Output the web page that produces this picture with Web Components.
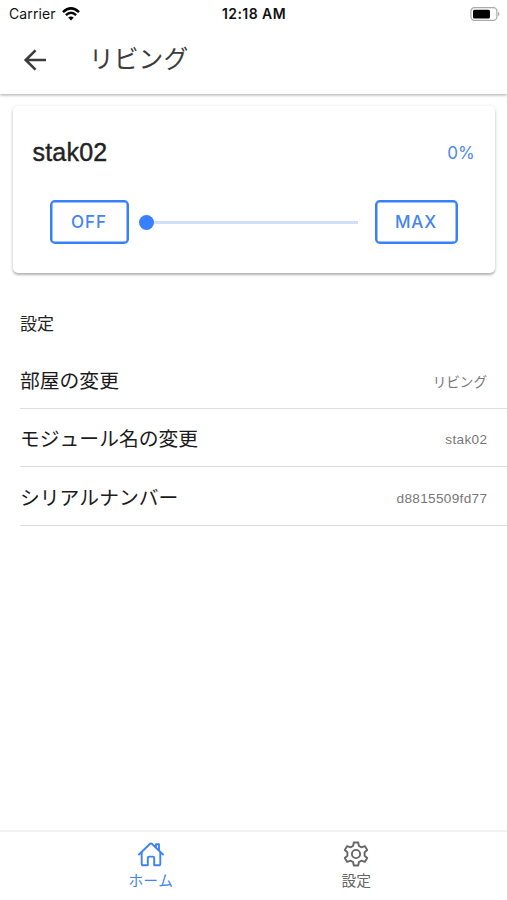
<!DOCTYPE html>
<html lang="ja">
<head>
<meta charset="utf-8">
<title>リビング</title>
<style>
html,body{margin:0;height:100%;background:#fff}
body{font-family:"Liberation Sans","Noto Sans CJK JP",sans-serif;color:#222;font-kerning:none}
</style>
</head>
<body>
<room-screen></room-screen>
<script>
const define = (name, html) => customElements.define(name, class extends HTMLElement {
  constructor() {
    super();
    const t = document.createElement('template');
    t.innerHTML = html;
    this.attachShadow({mode: 'open'}).append(t.content.cloneNode(true));
  }
});

define('status-bar', `<style>
:host{display:grid;grid-template-columns:1fr auto 1fr;align-items:center;height:28px;box-sizing:border-box;padding:0 7px 1px 9px;font:14px/26px Inter,sans-serif;color:#111;background:#fff;position:relative;z-index:1}
.left{display:flex;align-items:center;gap:6px;letter-spacing:.1px}
b{font-weight:600;font-size:14px;letter-spacing:.45px;margin-right:1px}
.battery{justify-self:end}
svg{display:block}
</style>
<div class="left"><span>Carrier</span><svg width="18" height="14" viewBox="0 0 18 14" fill="none" stroke="#000" stroke-width="2.5"><path d="M1 5.1Q9-2.4 17 5.1M3.9 8.1Q9 3.3 14.1 8.1"/><path d="M9 13.4 6.2 10.6Q9 8.3 11.8 10.6Z" fill="#000" stroke="none"/></svg></div>
<b>12:18 AM</b>
<svg class="battery" width="30" height="14" viewBox="0 0 30 14"><rect x=".9" y=".7" width="26" height="12.6" rx="3.6" fill="none" stroke="#aaa" stroke-width="1.2"/><rect x="3" y="2.8" width="17" height="8.6" rx="1.5"/><path d="M28 4.8Q31 7 28 9.2Z" fill="#aaa"/></svg>`);

define('nav-header', `<style>
:host{display:flex;align-items:center;gap:42px;height:66px;box-sizing:border-box;padding:0 0 2px 23px;position:relative;background:#fff;box-shadow:0 1px 3px rgba(0,0,0,.36);font-size:24.8px;line-height:36px;color:#3c3c3c}
svg{display:block;width:24px;height:22px;flex:none}
</style>
<svg viewBox="0 0 24 22" fill="none" stroke="#3c3c3c" stroke-width="2.6"><path d="M23 11H3M12.5 1.3 2.7 11l9.8 9.7"/></svg><slot></slot>`);

define('outline-button', `<style>
:host{display:flex;align-items:center;justify-content:center;box-sizing:border-box;height:44px;border:2px solid #3880f5;box-shadow:inset 0 0 0 .5px #3880f5;border-radius:5px;color:#4484f3;font:500 17px/40px Inter,sans-serif;letter-spacing:.9px;padding-right:1px}
</style><slot></slot>`);

define('level-slider', `<style>
:host{display:flex;align-items:center}
i{width:15px;height:15px;border-radius:50%;background:#3880ff;flex:none}
span{height:3px;flex:1;background:#d0dffa}
</style><i></i><span></span>`);

define('module-card', `<style>
:host{display:flex;flex-direction:column;margin:12px 12px 0 13px;height:167px;box-sizing:border-box;border-radius:5px;background:#fff;box-shadow:0 2px 2px rgba(0,0,0,.22),0 1px 4px rgba(0,0,0,.14)}
.top{display:flex;justify-content:space-between;align-items:center;padding:28px 20px 0 19.5px;height:37px}
.name{font-size:25px;line-height:36px;letter-spacing:.2px;color:#222;-webkit-text-stroke:.4px #222;margin-top:-1px}
.value{font:17px/36px Inter,sans-serif;letter-spacing:.2px;color:#4d87ef}
.controls{display:grid;grid-template-columns:79px 1fr 83px;padding:29px 37px 0 37px}
level-slider{margin:0 17px 0 10px}
</style>
<div class="top"><span class="name">stak02</span><span class="value">0%</span></div>
<div class="controls"><outline-button>OFF</outline-button><level-slider></level-slider><outline-button>MAX</outline-button></div>`);

define('setting-row', `<style>
:host{display:flex;justify-content:space-between;align-items:center;height:58.6px;box-sizing:border-box;border-bottom:1.5px solid #dedede;padding:1px 20px 0 0;font-size:19.8px;color:#1b1b1b}
.v{font-size:13.6px;color:#777;margin-top:4px}
::slotted([lang=en]){letter-spacing:.32px;margin-right:-.3px}
</style><slot></slot><span class="v"><slot name="value"></slot></span>`);

define('settings-list', `<style>
:host{display:block;padding:38px 0 0 20px}
h2{margin:0 0 12px;font-size:17px;line-height:27px;font-weight:400;color:#222}
</style><h2>設定</h2><slot></slot>`);

define('tab-item', `<style>
:host{display:flex;flex-direction:column;align-items:center;color:#666;font-size:14.8px;line-height:22px;width:205.5px;padding-top:8px;gap:2px}
:host([active]){color:#4384f4}
::slotted(svg){display:block;width:28px;height:28px}
</style><slot name="icon"></slot><span><slot></slot></span>`);

define('tab-bar', `<style>
:host{display:flex;justify-content:center;height:70px;box-sizing:border-box;border-top:2px solid #f3f3f3;background:#fff}
</style><slot></slot>`);

define('room-screen', `<style>
:host{display:flex;flex-direction:column;height:100vh;background:#fff}
tab-bar{margin-top:auto}
</style>
<status-bar></status-bar>
<nav-header>リビング</nav-header>
<module-card></module-card>
<settings-list>
<setting-row>部屋の変更<span slot="value">リビング</span></setting-row>
<setting-row>モジュール名の変更<span slot="value" lang="en">stak02</span></setting-row>
<setting-row>シリアルナンバー<span slot="value" lang="en">d8815509fd77</span></setting-row>
</settings-list>
<tab-bar>
<tab-item active><svg slot="icon" viewBox="0 0 28 28" fill="none" stroke="#3f82f4" stroke-width="1.9" stroke-linecap="round" stroke-linejoin="round"><path d="M4.7 12.5V23.7q0 1.6 1.6 1.6h4.5V18q0-1.4 1.4-1.4h3.6q1.4 0 1.4 1.4v7.3h4.5q1.6 0 1.6-1.6V12.5"/><path d="M2 14.5 13.1 3.8q.9-.8 1.8 0L26 14.5M19 7.5V4.3h3v6.1"/></svg>ホーム</tab-item>
<tab-item><svg slot="icon" viewBox="0 0 28 28" fill="none" stroke="#666" stroke-width="1.9" stroke-linejoin="round"><circle cx="14" cy="14" r="4.1"/><path d="M11.8 2.5h4.4l.7 3.4 2.4 1.4 3.5-1.2 2.4 3.9-2.6 2.3v3.4l2.6 2.3-2.4 3.9-3.5-1.2-2.4 1.4-.7 3.4h-4.4l-.7-3.4-2.4-1.4-3.5 1.2-2.4-3.9 2.6-2.3v-3.4L2.8 10l2.4-3.9 3.5 1.2 2.4-1.4Z"/></svg>設定</tab-item>
</tab-bar>`);
</script>
</body>
</html>
